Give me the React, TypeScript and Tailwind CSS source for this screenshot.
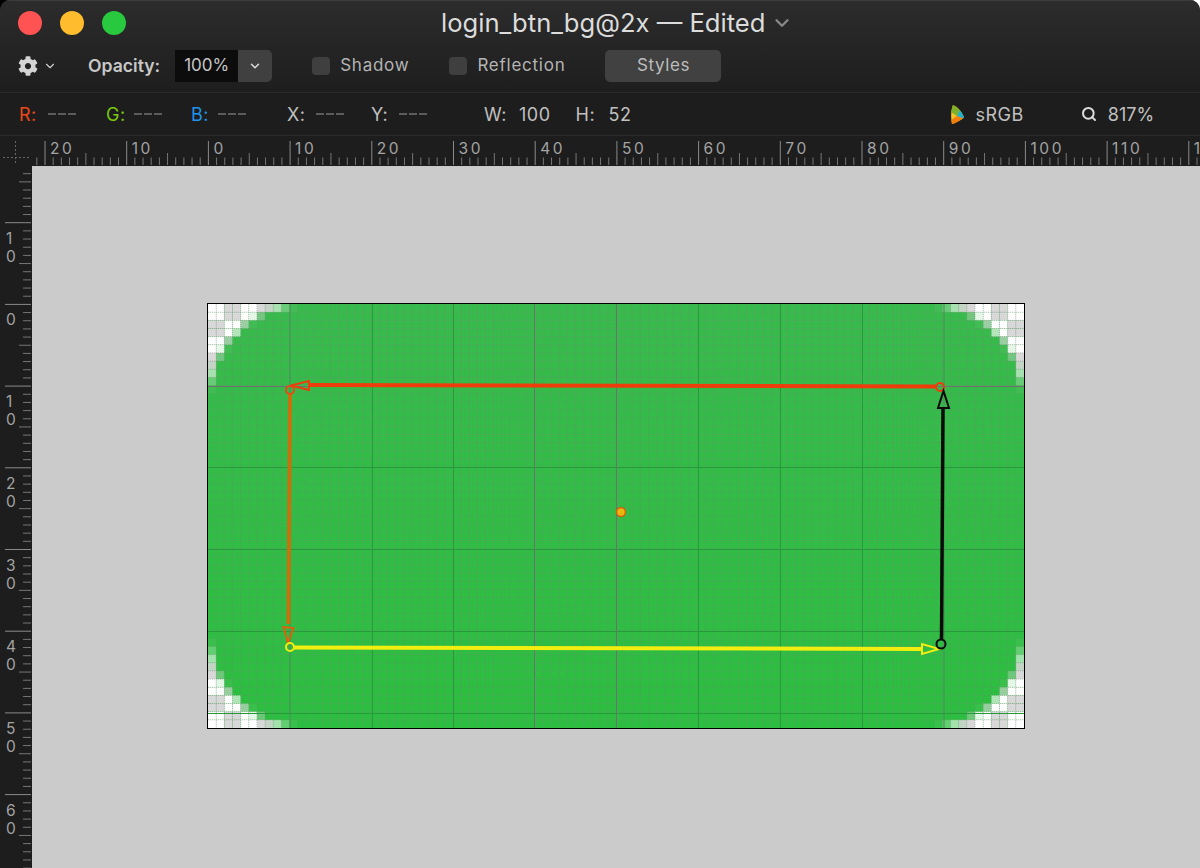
import { ChevronDown, Search } from "lucide-react";
import { FaCog } from "react-icons/fa";

const FONT = "[font-family:Inter,'Liberation_Sans',sans-serif]";
const PX_W = 8.16;
const PX_H = 8.154;
const RADIUS = 12;

// how much of a pixel is outside the rounded corner (0 = solid, 1 = transparent)
function outside(i: number, j: number) {
  let miss = 0;
  for (let a = 0; a < 4; a++) {
    for (let b = 0; b < 4; b++) {
      const dx = RADIUS - (i + (a + 0.5) / 4);
      const dy = RADIUS - (j + (b + 0.5) / 4);
      if (dx > 0 && dy > 0 && dx * dx + dy * dy > RADIUS * RADIUS) miss++;
    }
  }
  return miss / 16;
}

function Dashes() {
  return (
    <span className="flex w-[28px] justify-between">
      <span className="h-[1.5px] w-[8px] bg-[#5c5c5c]" />
      <span className="h-[1.5px] w-[8px] bg-[#5c5c5c]" />
      <span className="h-[1.5px] w-[8px] bg-[#5c5c5c]" />
    </span>
  );
}

function Check({ label, className }: { label: string; className: string }) {
  return (
    <div className={`flex items-center gap-[10px] ${className}`}>
      <span className="h-[18px] w-[18px] rounded-[4px] bg-[#3f3f3f]" />
      <span className="text-[17px] tracking-[0.75px] text-[#b4b4b4]">{label}</span>
    </div>
  );
}

function TopRuler() {
  const ticks = [];
  const labels = [];
  for (let k = -21; k <= 122; k++) {
    const x = 208.4 + k * 8.17;
    const major = k % 10 === 0;
    const mid = k % 5 === 0;
    const y1 = major ? 141 : mid ? 153 : 157.5;
    ticks.push(
      <line key={k} x1={x} x2={x} y1={y1 - 136} y2={29} stroke={major ? "#8a8a8a" : "#767676"} strokeWidth={1} />
    );
    if (major) {
      labels.push(
        <text key={k} x={x + 5} y={18} fontSize={15.5} letterSpacing={2.6} fill="#a3a3a3">
          {Math.abs(k)}
        </text>
      );
    }
  }
  return (
    <svg width={1200} height={30} className="block bg-[#1d1d1d]">
      {ticks}
      {labels}
      <line x1={15.5} x2={15.5} y1={5} y2={28} stroke="#666" strokeDasharray="2 2" />
      <line x1={3} x2={29} y1={21.5} y2={21.5} stroke="#666" strokeDasharray="2 2" />
    </svg>
  );
}

function LeftRuler() {
  const ticks = [];
  const labels = [];
  for (let k = -17; k <= 69; k++) {
    const y = 304.4 + k * 8.17 - 166;
    const major = k % 10 === 0;
    const mid = k % 5 === 0;
    const x1 = major ? 5 : mid ? 19 : 23;
    ticks.push(<line key={k} x1={x1} x2={31} y1={y} y2={y} stroke={major ? "#8a8a8a" : "#767676"} />);
    if (major) {
      const digits = String(Math.abs(k)).split("");
      digits.forEach((d, n) => {
        labels.push(
          <text key={`${k}-${n}`} x={6} y={y + 21 + n * 18} fontSize={15.5} fill="#a3a3a3">
            {d}
          </text>
        );
      });
    }
  }
  return (
    <svg width={32} height={702} className="block shrink-0 bg-[#1d1d1d]">
      {ticks}
      {labels}
    </svg>
  );
}

function BitmapPreview() {
  const pixels = [];
  for (let i = 0; i < 100; i++) {
    for (let j = 0; j < 52; j++) {
      const mi = Math.min(i, 99 - i);
      const mj = Math.min(j, 51 - j);
      if (mi >= RADIUS || mj >= RADIUS) continue;
      const o = outside(mi, mj);
      if (o === 0) continue;
      const white = (Math.floor(mi / 2) + Math.floor(mj / 2)) % 2 === 0;
      pixels.push(
        <rect
          key={`${i}-${j}`}
          x={208 + i * PX_W}
          y={304 + j * PX_H}
          width={PX_W}
          height={PX_H}
          fill={white ? "#ffffff" : "#d8d8d8"}
          opacity={o}
        />
      );
    }
  }

  const dotted = [];
  for (let i = 1; i < 100; i++) {
    const x = 208 + i * PX_W;
    dotted.push(<line key={`v${i}`} x1={x} x2={x} y1={304} y2={728} stroke="#7d7d7d" strokeOpacity={0.4} strokeDasharray="1 1" />);
  }
  for (let j = 1; j < 52; j++) {
    const y = 304 + j * PX_H;
    dotted.push(<line key={`h${j}`} x1={208} x2={1024} y1={y} y2={y} stroke="#7d7d7d" strokeOpacity={0.4} strokeDasharray="1 1" />);
  }

  return (
    <svg width={816} height={424} viewBox="208 304 816 424" className="block">
      <defs>
        <linearGradient id="btn" x1="0" y1="0" x2="0" y2="1">
          <stop offset="0" stopColor="#38ba4c" />
          <stop offset="1" stopColor="#2cbe40" />
        </linearGradient>
      </defs>
      <rect x={208} y={304} width={816} height={424} fill="url(#btn)" />
      {pixels}
      {dotted}

      {/* pixel grid every 10 */}
      {[372, 453, 698, 780, 862].map((x) => (
        <line key={x} x1={x + 0.5} x2={x + 0.5} y1={304} y2={728} stroke="#279a3c" />
      ))}
      {[467, 549, 631, 713].map((y) => (
        <line key={y} x1={208} x2={1024} y1={y + 0.5} y2={y + 0.5} stroke="#279a3c" />
      ))}

      {/* guides */}
      {[534, 616].map((x) => (
        <line key={x} x1={x + 0.5} x2={x + 0.5} y1={304} y2={728} stroke="#707070" />
      ))}
      <line x1={290} x2={290} y1={304} y2={728} stroke="#4f8a5c" />
      <line x1={944} x2={944} y1={304} y2={728} stroke="#4f8a5c" />
      <line x1={208} x2={1024} y1={386.5} y2={386.5} stroke="#707070" />

      {/* left edge, orange */}
      <line x1={290} y1={394} x2={288.5} y2={624} stroke="#c9700f" strokeWidth={4} />
      <path d="M283.5 627 L293.5 628 L288 643 Z" fill="none" stroke="#e0600c" strokeWidth={2} />
      <circle cx={290} cy={390} r={4} fill="none" stroke="#ea4a12" strokeWidth={2} />

      {/* top edge, red */}
      <line x1={936} y1={386.5} x2={310} y2={385} stroke="#ee3d0b" strokeWidth={4} />
      <path d="M309 381 L309 390 L291 385.5 Z" fill="none" stroke="#ee3d0b" strokeWidth={2} />
      <circle cx={940} cy={387} r={4} fill="none" stroke="#ee3d0b" strokeWidth={2} />

      {/* bottom edge, yellow */}
      <line x1={294} y1={647.5} x2={922} y2={649} stroke="#f2ee10" strokeWidth={4} />
      <path d="M922 644 L922 654 L939 649 Z" fill="none" stroke="#f2ee10" strokeWidth={2} />
      <circle cx={290} cy={647} r={4} fill="none" stroke="#f2ee10" strokeWidth={2} />

      {/* right edge, black */}
      <line x1={941.5} y1={640} x2={943} y2={408} stroke="#0a0a0a" strokeWidth={3.5} />
      <path d="M938 408 L949 408 L943.5 391 Z" fill="none" stroke="#0a0a0a" strokeWidth={2} />
      <circle cx={941} cy={644} r={4.5} fill="none" stroke="#0a0a0a" strokeWidth={2} />

      {/* anchor */}
      <circle cx={621} cy={512} r={4.5} fill="#e8b80e" stroke="#d4600f" strokeWidth={1.5} />
    </svg>
  );
}

function ColorSpaceIcon() {
  return (
    <svg width={13} height={19} viewBox="0 0 13 19" className="block shrink-0">
      <defs>
        <clipPath id="gamut">
          <path d="M2 0 C7 2 11 7 13 12.5 C10 15 5 18 1 19 C-0.5 12 0 5 2 0Z" />
        </clipPath>
      </defs>
      <g clipPath="url(#gamut)">
        <rect width={13} height={19} fill="#f6c523" />
        <path d="M0 0 H13 V8 L6 11 L0 7 Z" fill="#7fb028" />
        <path d="M6 11 L9 5 L13 8 V14 Z" fill="#22aed0" />
        <path d="M6 11 L13 14 V19 H0 V15 Z" fill="#f27d0c" />
      </g>
    </svg>
  );
}

export default function App() {
  return (
    <div className={`h-[868px] w-[1200px] overflow-hidden bg-[linear-gradient(90deg,#000_50%,#fff_50%)] ${FONT}`}>
      <div className="flex h-full flex-col overflow-hidden rounded-t-[10px] bg-[#1d1d1d]">
        <div className="bg-[linear-gradient(#2c2c2c,#1e1e1e)]">
          {/* title bar */}
          <div className="flex h-[44px] items-center border-t border-[#3c3c3c] pl-[18px]">
            <span className="h-[24px] w-[24px] rounded-full bg-[#ff5353]" />
            <span className="ml-[18px] h-[24px] w-[24px] rounded-full bg-[#ffbd2e]" />
            <span className="ml-[18px] h-[24px] w-[24px] rounded-full bg-[#28c83f]" />
            <span className="ml-[315px] text-[25.6px] leading-none text-[#dcdcdc]">login_btn_bg@2x — Edited</span>
            <ChevronDown size={22} strokeWidth={2.5} className="ml-[6px] text-[#8a8a8a]" />
          </div>

          {/* toolbar */}
          <div className="flex h-[48px] items-center pb-[4px] pl-[18px]">
            <FaCog size={20} className="text-[#d4d4d4]" />
            <ChevronDown size={14} strokeWidth={2} className="ml-[5px] text-[#cfcfcf]" />
            <span className="ml-[31px] text-[17.6px] font-semibold text-[#c8c8c8]">Opacity:</span>
            <div className="ml-[15px] flex h-[32px] items-stretch">
              <span className="flex w-[63px] items-center justify-center bg-[#0c0c0c] text-[17px] text-[#c6c6c6]">100%</span>
              <span className="flex w-[34px] items-center justify-center rounded-r-[5px] bg-[#404040]">
                <ChevronDown size={14} strokeWidth={2.5} className="text-[#dcdcdc]" />
              </span>
            </div>
            <Check label="Shadow" className="ml-[40px]" />
            <Check label="Reflection" className="ml-[40px]" />
            <button className="ml-[40px] h-[32px] w-[116px] rounded-[5px] bg-[#414141] text-[17px] tracking-[0.6px] text-[#bcbcbc]">
              Styles
            </button>
          </div>
        </div>

        {/* colour and size readout */}
        <div className="flex h-[44px] items-center border-y border-[#2a2a2a] pl-[19px] text-[18px] tracking-[0.5px] text-[#c0c0c0]">
          <span className="w-[29px] text-[#e9481a]">R:</span>
          <Dashes />
          <span className="ml-[30px] w-[28px] text-[#7ac70c]">G:</span>
          <Dashes />
          <span className="ml-[29px] w-[27px] text-[#1f94ea]">B:</span>
          <Dashes />
          <span className="ml-[41px] w-[29px]">X:</span>
          <Dashes />
          <span className="ml-[27px] w-[28px]">Y:</span>
          <Dashes />
          <span className="ml-[57px] w-[35px]">W:</span>
          <span>100</span>
          <span className="ml-[25px] w-[33px]">H:</span>
          <span>52</span>
          <span className="ml-[320px]">
            <ColorSpaceIcon />
          </span>
          <span className="ml-[11px]">sRGB</span>
          <Search size={16} strokeWidth={3} className="ml-[57px] text-[#dcdcdc]" />
          <span className="ml-[11px] tracking-normal">817%</span>
        </div>

        <TopRuler />

        {/* canvas */}
        <div className="flex flex-1">
          <LeftRuler />
          <div className="flex-1 bg-[#cbcbcb] pl-[175px] pt-[137px]">
            <div className="w-fit border border-black">
              <BitmapPreview />
            </div>
          </div>
        </div>
      </div>
    </div>
  );
}
